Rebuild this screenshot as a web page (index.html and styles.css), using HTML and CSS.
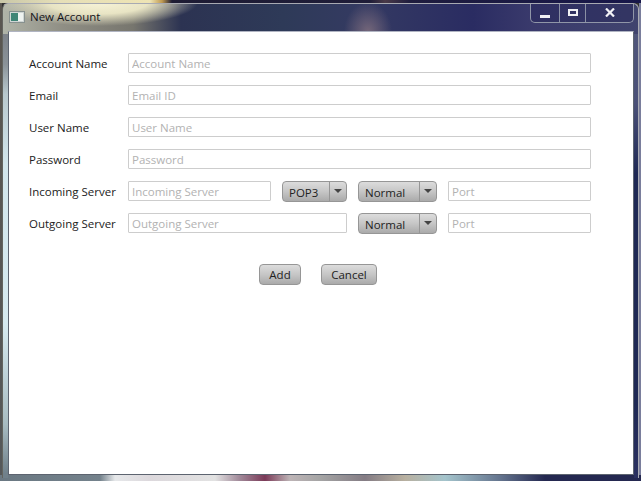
FILE: index.html
```html
<!DOCTYPE html>
<html lang="en">
  <head>
    <meta charset="UTF-8" />
    <title>New Account</title>
    <link rel="stylesheet" href="styles.css">
  </head>
  <body>
    <div class="window">
      <div class="titlebar">
        <svg class="app-icon" width="16" height="12" viewBox="0 0 16 12">
          <rect x="0.5" y="0.5" width="15" height="11" fill="#cfd6d4" stroke="#87918f" />
          <rect x="2" y="2" width="7" height="8" fill="#3f8576" />
          <rect x="9" y="2" width="5" height="8" fill="#eef3f0" />
        </svg>
        <span class="title">New Account</span>
        <div class="caption-buttons">
          <div class="caption-button min"><span class="min-glyph"></span></div>
          <div class="caption-button max"><span class="max-glyph"></span></div>
          <div class="caption-button close">
            <svg width="10" height="9" viewBox="0 0 10 9">
              <path d="M1 0.5 L9 8.5 M9 0.5 L1 8.5" stroke="#f2f2f6" stroke-width="2.2" fill="none" />
            </svg>
          </div>
        </div>
      </div>

      <div class="content">
        <form class="account-form">
          <label class="field-label">Account Name</label>
          <div class="field-row"><input class="text-input" type="text" placeholder="Account Name" /></div>

          <label class="field-label">Email</label>
          <div class="field-row"><input class="text-input" type="text" placeholder="Email ID" /></div>

          <label class="field-label">User Name</label>
          <div class="field-row"><input class="text-input" type="text" placeholder="User Name" /></div>

          <label class="field-label">Password</label>
          <div class="field-row"><input class="text-input" type="text" placeholder="Password" /></div>

          <label class="field-label">Incoming Server</label>
          <div class="field-row">
            <input class="text-input server-in" type="text" placeholder="Incoming Server" />
            <div class="combo combo-protocol"><span class="combo-value">POP3</span><span class="combo-arrow"></span></div>
            <div class="combo combo-security"><span class="combo-value">Normal</span><span class="combo-arrow"></span></div>
            <input class="text-input port" type="text" placeholder="Port" />
          </div>

          <label class="field-label">Outgoing Server</label>
          <div class="field-row">
            <input class="text-input server-out" type="text" placeholder="Outgoing Server" />
            <div class="combo combo-security"><span class="combo-value">Normal</span><span class="combo-arrow"></span></div>
            <input class="text-input port" type="text" placeholder="Port" />
          </div>
        </form>

        <div class="actions">
          <button class="btn btn-add" type="button">Add</button>
          <button class="btn btn-cancel" type="button">Cancel</button>
        </div>
      </div>
    </div>
  </body>
</html>
```

FILE: styles.css
```css
html,
body {
  margin: 0;
  height: 481px;
  overflow: hidden;
}

body {
  box-sizing: border-box;
  padding: 3px 2px 2px;
  font-family: "Open Sans", "Noto Sans", sans-serif;
  font-size: 11.5px;
  color: #222;
  background:
    linear-gradient(90deg, #6a7882 0, #74828c 100px, #e6e8ea 115px, #dcd8dc 150px, #e2e2e2 215px, #a08898 240px, #7b3a58 265px, #bdb4b6 290px, #a4a4a4 321px, #847c84 365px, #b8b0a0 405px, #a4c4cc 445px, #64748e 500px, #242850 545px) bottom / 100% 6px no-repeat,
    linear-gradient(90deg, #c9c7a8 0, #e6dfb8 60px, #eee4b4 150px, #c09a50 162px, #1e1c34 172px, #1f1d38 370px, #4a3a48 385px, #1f1d3e 410px, #17174a 641px) top / 100% 3px no-repeat,
    linear-gradient(180deg, #5a5650 0, #55585a 100%) left / 2px 100% no-repeat,
    linear-gradient(180deg, #7a7e9c 0, #7a7e9c 100%) right / 2px 100% no-repeat,
    #333;
}

.window {
  box-sizing: border-box;
  height: 475px;
  display: flex;
  flex-direction: column;
  padding: 0 4px 3px 5px;
  border: 1px solid #a8aab2;
  border-bottom: 0;
  border-left-color: #63645f;
  border-radius: 6px 6px 0 0;
  background:
    radial-gradient(ellipse 100px 24px at 95px -2px, #f8f4d8 0%, #e8e4c4 50%, rgba(190, 186, 165, 0) 100%) top / 100% 30px no-repeat,
    radial-gradient(ellipse 24px 30px at 365px 28px, #75677a 0%, rgba(90, 80, 110, 0) 100%) top / 100% 30px no-repeat,
    linear-gradient(90deg, #b0b4a8 0, #8f8e84 60px, #77766e 130px, #2c3352 178px, #2e3a58 280px, #343a62 360px, #2a2c62 470px, #3a3a6c 530px, #40446e 641px) top / 100% 30px no-repeat,
    linear-gradient(180deg, #70737a 0, #8a9298 60px, #b8c8ce 90px, #d2e6ec 160px, #d6eaf0 320px, #a8bcc2 420px, #70808a 470px) left / 5px 100% no-repeat,
    linear-gradient(180deg, #52587c 0, #4a5078 100px, #1e2854 170px, #1e2854 400px, #2a3060 470px) right / 4px 100% no-repeat;
}

.titlebar {
  display: flex;
  align-items: flex-start;
  height: 27px;
  flex-shrink: 0;
}

.app-icon {
  margin: 7px 5px 0 1px;
}

.title {
  margin-top: 4px;
  font-size: 11.5px;
  line-height: 17px;
  color: #14141a;
}

.caption-buttons {
  display: flex;
  margin-left: auto;
  height: 18px;
  border: 1px solid #9096a8;
  border-top: 0;
  border-radius: 0 0 5px 5px;
  background: rgba(30, 30, 80, 0.35);
}

.caption-button {
  display: flex;
  align-items: center;
  justify-content: center;
  height: 100%;
  border-right: 1px solid #8a90a4;
}

.caption-button.min {
  width: 28px;
}

.caption-button.max {
  width: 25px;
}

.caption-button.close {
  width: 47px;
  border-right: 0;
}

.caption-button.close svg {
  margin-bottom: 2px;
}

.min-glyph {
  width: 10px;
  height: 3px;
  margin-top: 7px;
  background: #f0f0f4;
}

.max-glyph {
  box-sizing: border-box;
  width: 10px;
  height: 7px;
  margin-bottom: 1px;
  border: 2px solid #f0f0f4;
}

.content {
  flex: 1;
  padding: 21px 42px 0 20px;
  border: 1px solid #5d6470;
  border-top-color: #b0b4c2;
  background: #fff;
}

.account-form {
  display: grid;
  grid-template-columns: 99px 1fr;
  grid-auto-rows: 20px;
  row-gap: 12px;
  align-items: center;
}

.field-label {
  margin-top: 2px;
  line-height: 20px;
  white-space: nowrap;
}

.field-row {
  display: flex;
  align-items: center;
  gap: 11px;
  height: 20px;
}

.text-input {
  box-sizing: border-box;
  flex: 1;
  min-width: 0;
  height: 20px;
  padding: 0 3px;
  border: 1px solid #cdcdcd;
  border-radius: 1px;
  font: inherit;
  background: #fff;
  outline: none;
}

.text-input::placeholder {
  color: #b2b2b2;
  opacity: 1;
}

.server-in {
  flex: 0 0 143px;
}

.server-out {
  flex: 0 0 219px;
}

.port {
  flex: 0 0 143px;
}

.combo {
  box-sizing: border-box;
  display: flex;
  flex-shrink: 0;
  height: 21px;
  border: 1px solid #969696;
  border-radius: 4px;
  background: linear-gradient(180deg, #dcdcdc 0%, #c6c6c6 50%, #aaaaaa 100%);
}

.combo-protocol {
  width: 65px;
}

.combo-security {
  width: 79px;
}

.combo-value {
  flex: 1;
  padding-left: 6px;
  line-height: 21px;
  color: #222;
}

.combo-arrow {
  position: relative;
  width: 16px;
  border-left: 1px solid #969696;
}

.combo-arrow::after {
  content: "";
  position: absolute;
  left: 4px;
  top: 7px;
  border-left: 4px solid transparent;
  border-right: 4px solid transparent;
  border-top: 4px solid #444;
}

.actions {
  display: flex;
  gap: 20px;
  margin-top: 31px;
  padding-left: 230px;
}

.btn {
  box-sizing: border-box;
  height: 21px;
  padding: 0;
  border: 1px solid #969696;
  border-radius: 4px;
  font: inherit;
  line-height: 18px;
  color: #222;
  background: linear-gradient(180deg, #dcdcdc 0%, #c6c6c6 50%, #aaaaaa 100%);
}

.btn-add {
  width: 42px;
}

.btn-cancel {
  width: 56px;
}
```
